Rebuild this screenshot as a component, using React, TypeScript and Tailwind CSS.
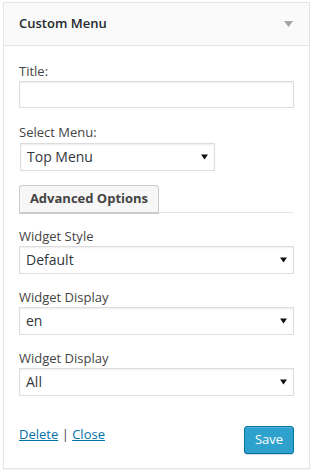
import React from "react";

function Caret({ className }: { className?: string }) {
  return (
    <svg width="7" height="6" viewBox="0 0 7 6" className={className}>
      <path d="M0 0.5 H7 L3.5 5.5 Z" fill="#111" />
    </svg>
  );
}

function FakeSelect({ value, width }: { value: string; width: string }) {
  return (
    <div
      className={`${width} h-[28px] border border-[#dddddd] bg-white shadow-[inset_0_1px_2px_rgba(0,0,0,0.07)] flex items-center justify-between pl-[6px] pr-[6px]`}
    >
      <span className="text-[14px] text-[#32373c] leading-none">{value}</span>
      <Caret />
    </div>
  );
}

function Label({ children }: { children: React.ReactNode }) {
  return <div className="text-[13px] leading-[18px] h-[18px] mb-[1px] text-[#444]">{children}</div>;
}

export default function App() {
  return (
    <div
      className="w-[314px] h-[472px] bg-white pt-[2px] pl-[3px]"
      style={{ fontFamily: '"Open Sans", "Noto Sans", sans-serif' }}
    >
      <div className="w-[307px] h-[467px] border border-[#e5e5e5] shadow-[0_1px_1px_rgba(0,0,0,0.04)] flex flex-col bg-white">
        <div className="h-[43px] shrink-0 bg-[#fafafa] border-b border-[#e5e5e5] flex items-center justify-between pl-[15px] pr-[16px]">
          <span className="font-semibold text-[13px] text-[#23282d]">Custom Menu</span>
          <svg width="9" height="6" viewBox="0 0 9 6">
            <path d="M0 0 H9 L4.5 6 Z" fill="#a0a5aa" />
          </svg>
        </div>
        <div className="flex flex-col pl-[15px] pr-[16px] pt-[16px]">
          <Label>Title:</Label>
          <div className="w-[275px] h-[27px] border border-[#dddddd] shadow-[inset_0_1px_2px_rgba(0,0,0,0.07)] bg-white" />

          <div className="mt-[15px]">
            <Label>Select Menu:</Label>
          </div>
          <div className="ml-[1px] mt-[1px]">
            <FakeSelect value="Top Menu" width="w-[195px]" />
          </div>

          <div className="mt-[14px] flex items-end">
            <div className="h-[28px] w-[140px] border border-[#cccccc] rounded-t-[3px] bg-[#f7f7f7] shadow-[0_1px_0_#cccccc] flex items-center justify-center">
              <span className="font-bold text-[13px] text-[#444]">Advanced Options</span>
            </div>
            <div className="flex-1 border-b border-[#e5e5e5]" />
          </div>

          <div className="mt-[14px]">
            <Label>Widget Style</Label>
          </div>
          <FakeSelect value="Default" width="w-[275px]" />

          <div className="mt-[14px]">
            <Label>Widget Display</Label>
          </div>
          <FakeSelect value="en" width="w-[275px]" />

          <div className="mt-[14px]">
            <Label>Widget Display</Label>
          </div>
          <FakeSelect value="All" width="w-[275px]" />

          <div className="mt-[30px] flex items-start justify-between w-[275px]">
            <div className="text-[13px] leading-[18px] mt-[-1px] text-[#444]">
              <span className="text-[#0073aa] underline">Delete</span>
              <span className="text-[#444]"> | </span>
              <span className="text-[#0073aa] underline">Close</span>
            </div>
            <div className="h-[28px] w-[50px] rounded-[3px] border border-[#0074a2] bg-[#2ea2cc] shadow-[inset_0_1px_0_rgba(120,200,230,0.5),0_1px_0_rgba(0,0,0,0.15)] flex items-center justify-center">
              <span className="text-[13px] text-white">Save</span>
            </div>
          </div>
        </div>
      </div>
    </div>
  );
}
